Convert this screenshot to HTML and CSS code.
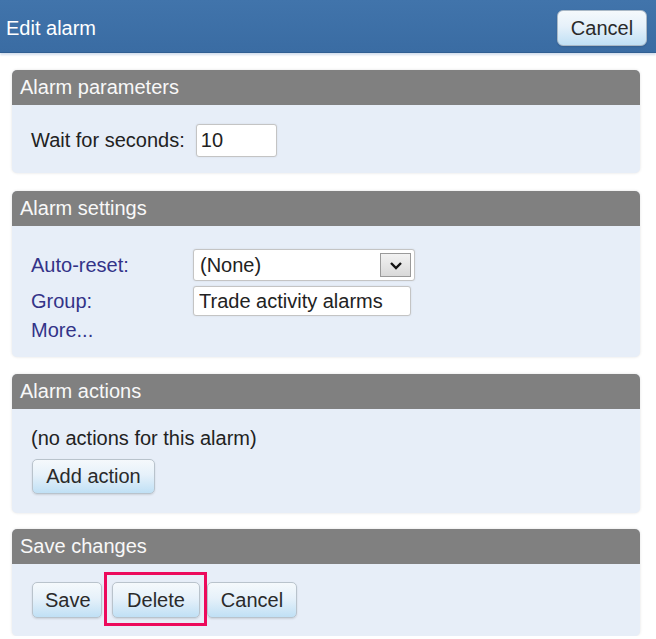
FILE: index.html
```html
<!DOCTYPE html>
<html>
<head>
<meta charset="utf-8">
<link rel="stylesheet" href="styles.css">
</head>
<body>
<div class="topbar">
  <span class="title">Edit alarm</span>
  <button class="btn btn-top">Cancel</button>
</div>
<div class="content">
  <section class="panel">
    <div class="panel-head">Alarm parameters</div>
    <div class="panel-body body-params">
      <label class="inline-label">Wait for seconds:</label>
      <input class="field field-seconds" type="text" value="10">
    </div>
  </section>
  <section class="panel panel-settings">
    <div class="panel-head">Alarm settings</div>
    <div class="panel-body body-settings">
      <div class="form-grid">
        <span class="link-label">Auto-reset:</span>
        <div class="select">
          <span class="select-text">(None)</span>
          <span class="select-arrow"><svg width="14" height="9" viewBox="0 0 14 9"><path d="M2 2 L7 7 L12 2" fill="none" stroke="#111" stroke-width="2.4"/></svg></span>
        </div>
        <span class="link-label">Group:</span>
        <input class="field field-group" type="text" value="Trade activity alarms">
        <span class="link-label more">More...</span>
      </div>
    </div>
  </section>
  <section class="panel panel-actions">
    <div class="panel-head">Alarm actions</div>
    <div class="panel-body body-actions">
      <div class="note">(no actions for this alarm)</div>
      <button class="btn btn-add">Add action</button>
    </div>
  </section>
  <section class="panel panel-save">
    <div class="panel-head">Save changes</div>
    <div class="panel-body body-save">
      <button class="btn btn-save">Save</button>
      <span class="highlight"><button class="btn btn-delete">Delete</button></span>
      <button class="btn btn-cancel">Cancel</button>
    </div>
  </section>
</div>
</body>
</html>
```

FILE: styles.css
```css
html, body {
  margin: 0;
  padding: 0;
  background: #ffffff;
  font-family: "Liberation Sans", Arial, sans-serif;
  font-size: 20px;
  color: #222222;
}

.topbar {
  height: 52px;
  background: linear-gradient(#4174ab, #3a6ca3);
  border-bottom: 1px solid #315f93;
  box-shadow: 0 2px 2px rgba(160, 185, 215, 0.45);
  display: flex;
  align-items: center;
  justify-content: space-between;
  padding: 0 9px 0 6px;
}

.title {
  color: #ffffff;
  font-size: 20px;
  padding-top: 4px;
}

.btn {
  font-family: "Liberation Sans", Arial, sans-serif;
  font-size: 20px;
  color: #2a2a2a;
  height: 36px;
  padding: 0 12px;
  border: 1px solid #b9c3cc;
  border-radius: 5px;
  background: linear-gradient(#f5f9fc 0%, #e6f1fa 45%, #c0e0f5 100%);
  box-shadow: 0 1px 2px rgba(0, 0, 0, 0.12);
  cursor: pointer;
}

.btn-top {
  width: 90px;
  height: 36px;
  margin-top: 4px;
  border-radius: 6px;
  border-color: #a9b8c6;
}

.content {
  padding: 17px 16px 0 12px;
  display: flex;
  flex-direction: column;
}

.panel {
  border-radius: 5px;
  box-shadow: 0 0 3px rgba(0, 0, 0, 0.12);
  background: #e7eef8;
}

.panel-settings {
  margin-top: 18px;
}

.panel-actions {
  margin-top: 17px;
}

.panel-save {
  margin-top: 16px;
}

.panel-head {
  height: 35px;
  line-height: 35px;
  background: #808080;
  color: #f8f8f8;
  padding-left: 8px;
  border-radius: 5px 5px 0 0;
  font-size: 20px;
}

.panel-body {
  padding-left: 19px;
}

.body-params {
  height: 68px;
  display: flex;
  align-items: center;
  padding-top: 2px;
  box-sizing: border-box;
}

.inline-label {
  margin-right: 11px;
}

.field {
  font-family: "Liberation Sans", Arial, sans-serif;
  font-size: 20px;
  color: #222222;
  border: 1px solid #c4c4c4;
  border-radius: 3px;
  background: #ffffff;
  box-sizing: border-box;
  outline: none;
  box-shadow: 0 0 2px rgba(0, 0, 0, 0.1);
}

.field-seconds {
  width: 81px;
  height: 33px;
  padding: 0 4px;
}

.body-settings {
  height: 131px;
  box-sizing: border-box;
  padding-top: 23px;
}

.form-grid {
  display: grid;
  grid-template-columns: 162px auto;
  row-gap: 5px;
  align-items: center;
  justify-items: start;
}

.link-label {
  color: #333388;
}

.more {
  grid-column: 1 / span 2;
  margin-top: -2px;
}

.select {
  width: 222px;
  height: 32px;
  box-sizing: border-box;
  border: 1px solid #c4c4c4;
  border-radius: 3px;
  background: #ffffff;
  display: flex;
  align-items: center;
  justify-content: space-between;
  padding: 0 3px 0 6px;
  box-shadow: 0 0 2px rgba(0, 0, 0, 0.1);
}

.select-text {
  color: #222222;
}

.select-arrow {
  width: 31px;
  height: 24px;
  box-sizing: border-box;
  border: 1px solid #9a9a9a;
  background: linear-gradient(#f2f2f2, #d9d9d9);
  display: flex;
  align-items: center;
  justify-content: center;
}

.field-group {
  width: 218px;
  height: 30px;
  padding: 0 5px;
}

.body-actions {
  height: 104px;
  box-sizing: border-box;
  padding-top: 17px;
  display: flex;
  flex-direction: column;
  align-items: flex-start;
}

.note {
  line-height: 24px;
  margin-bottom: 9px;
}

.btn-add {
  height: 35px;
  width: 123px;
  margin-left: 1px;
}

.body-save {
  height: 72px;
  box-sizing: border-box;
  display: flex;
  align-items: center;
  padding-left: 20px;
}

.btn-save {
  width: 70px;
  margin-right: 10px;
}

.highlight {
  position: relative;
  display: inline-flex;
  margin-right: 7px;
}

.highlight::after {
  content: "";
  position: absolute;
  left: -8px;
  right: -7px;
  top: -10px;
  bottom: -8px;
  border: 3px solid #ec0a5c;
  pointer-events: none;
}

.btn-delete {
  width: 88px;
}

.btn-cancel {
  width: 90px;
}
```
